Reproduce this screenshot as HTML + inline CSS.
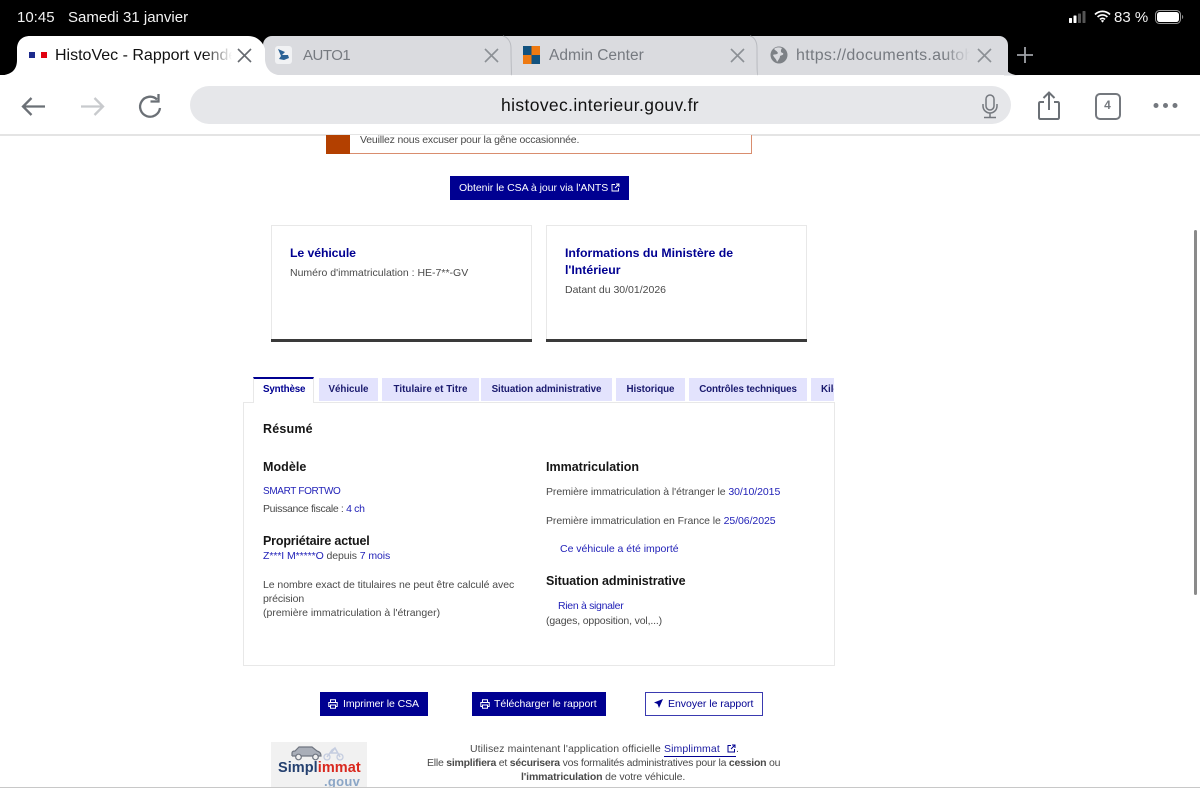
<!DOCTYPE html>
<html lang="fr"><head><meta charset="utf-8"><title>HistoVec</title>
<style>
html,body{margin:0;padding:0;background:#fff}
#p{position:relative;width:1200px;height:788px;overflow:hidden;background:#fff;font-family:"Liberation Sans",sans-serif;filter:blur(.3px)}
#p div{position:absolute}
.t{position:absolute;white-space:nowrap;line-height:1}
.g{color:#4a4a4a;font-size:10.5px;letter-spacing:-.06px}
.b{color:#2222b8}
.h{color:#161616;font-weight:bold;font-size:12.5px;letter-spacing:0}
.tab{position:absolute;top:378px;height:23px;background:#e3e3fd;color:#1a1a6e;font-size:9.8px;font-weight:bold;line-height:23px;text-align:center;white-space:nowrap;overflow:hidden;letter-spacing:-.05px;padding-top:0}
.btn{position:absolute;top:692px;height:24px;background:#000091}
svg{position:absolute;overflow:visible}
</style></head><body><div id="p">

<div style="left:0;top:0;width:1200px;height:75px;background:#000"></div>
<span class="t" style="left:17px;top:10px;color:#f2f2f2;font-size:15px">10:45</span>
<span class="t" style="left:68px;top:10px;color:#f2f2f2;font-size:15px">Samedi 31 janvier</span>
<svg style="left:1069px;top:11px" width="20" height="13"><rect x="0" y="7" width="3" height="5" rx=".6" fill="#fff"/><rect x="4.5" y="4.5" width="3" height="7.5" rx=".6" fill="#fff"/><rect x="9" y="2.5" width="3" height="9.5" rx=".6" fill="#555"/><rect x="13.5" y="0" width="3" height="12" rx=".6" fill="#555"/></svg>
<svg style="left:1094px;top:10px" width="17" height="13" viewBox="0 0 17 13"><path d="M1 4.5a10.5 10.5 0 0 1 15 0M3.6 7a6.8 6.8 0 0 1 9.8 0M6 9.4a3.4 3.4 0 0 1 5 0" fill="none" stroke="#fff" stroke-width="1.7"/><path d="M8.5 12.6l-1.6-1.8a2.2 2.2 0 0 1 3.2 0z" fill="#fff"/></svg>
<span class="t" style="left:1114px;top:10px;color:#f2f2f2;font-size:15px">83 %</span>
<svg style="left:1155px;top:10px" width="30" height="15"><rect x=".5" y=".5" width="25" height="13" rx="4" fill="none" stroke="#999"/><rect x="2" y="2" width="22" height="10" rx="2.6" fill="#fff"/><path d="M27 5v4c.9-.3 1.2-1.1 1.2-2s-.3-1.7-1.2-2z" fill="#888"/></svg>

<div style="left:0;top:75px;width:1200px;height:60px;background:#fff"></div>
<div style="left:263px;top:36px;width:745px;height:39px;background:#dadbdf;border-radius:9px 9px 0 0"></div>
<svg style="left:0;top:36px" width="1030" height="40"><path d="M0 39.5C10 39 17 35 17 24V13C17 5 22 0 30 0H248C257 0 263 6 265 13V24C266 34 272 39 282 39.5Z" fill="#fff"/><path d="M0 39.5H17V30C15 36 10 39 0 39.5Z" fill="#fff"/><path d="M1004 20V28C1005 35 1010 39 1020 39.5H1004Z" fill="#dadbdf"/><path d="M511 39C512 39 511 32 511 12 511 5 507 1 503 0M758 39C757 39 757 32 757 12 757 5 754 1 750 0" fill="none" stroke="#b9bbc0" stroke-width="1"/></svg>

<svg style="left:29px;top:51px" width="18" height="9"><rect x="0" y="1" width="6" height="6" fill="#1d2a8c"/><rect x="6" y="1" width="6" height="6" fill="#fff"/><rect x="12" y="1" width="6" height="6" fill="#e1000f"/></svg>
<span class="t" style="left:55px;top:47px;width:177px;overflow:hidden;color:#111;font-size:16px;letter-spacing:0;line-height:18px;-webkit-mask-image:linear-gradient(90deg,#000 84%,transparent 100%);mask-image:linear-gradient(90deg,#000 84%,transparent 100%)">HistoVec - Rapport vendeur</span>
<svg style="left:237px;top:48px" width="15" height="15"><path d="M1 1L14 14M14 1L1 14" stroke="#666a70" stroke-width="1.6" fill="none"/></svg>

<svg style="left:275px;top:46px" width="17" height="18"><rect width="17" height="18" rx="3" fill="#f1f2f4"/><path d="M3 3L10 6 7 9H13L14 12 9 14 4 13 6 10Z" fill="#2b6296"/></svg>
<span class="t" style="left:303px;top:47px;color:#767a80;font-size:15px;line-height:18px;letter-spacing:-.5px">AUTO1</span>
<svg style="left:484px;top:48px" width="15" height="15"><path d="M1 1L14 14M14 1L1 14" stroke="#8c9095" stroke-width="1.6" fill="none"/></svg>

<svg style="left:523px;top:46px" width="17" height="18"><rect width="8.5" height="9" fill="#12527f"/><rect x="8.5" width="8.5" height="9" fill="#ee7a12"/><rect y="9" width="8.5" height="9" fill="#ee7a12"/><rect x="8.5" y="9" width="8.5" height="9" fill="#12527f"/></svg>
<span class="t" style="left:549px;top:47px;color:#767a80;font-size:15.5px;line-height:18px;letter-spacing:0">Admin Center</span>
<svg style="left:730px;top:48px" width="15" height="15"><path d="M1 1L14 14M14 1L1 14" stroke="#8c9095" stroke-width="1.6" fill="none"/></svg>

<svg style="left:770px;top:46px" width="18" height="18" viewBox="0 0 18 18"><circle cx="9" cy="9" r="8.5" fill="#7d8186"/><path d="M4 3C6 5 7 5 8 7 7 9 4 8 3 9 4 12 6 12 7 16 9 13 10 12 10 10 12 9 14 9 13 7 11 7 10 5 12 2 9 1 6 1 4 3Z" fill="#dadbdf"/></svg>
<span class="t" style="left:796px;top:47px;width:174px;overflow:hidden;color:#767a80;font-size:16px;line-height:18px;letter-spacing:.3px;-webkit-mask-image:linear-gradient(90deg,#000 85%,transparent 100%);mask-image:linear-gradient(90deg,#000 85%,transparent 100%)">https://documents.autohero</span>
<svg style="left:977px;top:48px" width="15" height="15"><path d="M1 1L14 14M14 1L1 14" stroke="#8c9095" stroke-width="1.6" fill="none"/></svg>
<svg style="left:1017px;top:47px" width="16" height="16"><path d="M8 0V16M0 8H16" stroke="#a0a3a8" stroke-width="1.8" fill="none"/></svg>

<div style="left:190px;top:86px;width:821px;height:38px;border-radius:19px;background:#e6e7ea"></div>
<span class="t" style="left:501px;top:95px;color:#111;font-size:17.5px;line-height:20px;letter-spacing:.37px">histovec.interieur.gouv.fr</span>
<svg style="left:21px;top:96px" width="26" height="21"><path d="M24 10.5H2M10.5 2L2 10.5 10.5 19" stroke="#6b7076" stroke-width="2.3" fill="none"/></svg>
<svg style="left:79px;top:96px" width="26" height="21"><path d="M2 10.5H24M15.5 2L24 10.5 15.5 19" stroke="#c8cacd" stroke-width="2.3" fill="none"/></svg>
<svg style="left:137px;top:93px" width="27" height="26"><path d="M20 6.5A10 10 0 1 0 23 15" stroke="#6b7076" stroke-width="2.3" fill="none"/><path d="M21.5 1V8.500H13.5" stroke="#6b7076" stroke-width="2.3" fill="none"/></svg>
<svg style="left:981px;top:94px" width="18" height="25"><rect x="5" y="1" width="8" height="15" rx="4" fill="none" stroke="#74787e" stroke-width="1.5"/><path d="M2 10V12A7 7 0 0 0 16 12V10M9 19V23M3 23.5H15" fill="none" stroke="#74787e" stroke-width="1.5"/></svg>
<svg style="left:1037px;top:91px" width="24" height="30"><path d="M7 11H3.5Q2 11 2 12.5V26.5Q2 28 3.5 28H20.5Q22 28 22 26.5V12.5Q22 11 20.5 11H17M12 19V2M6.5 7L12 1.5 17.5 7" fill="none" stroke="#6b7076" stroke-width="2"/></svg>
<div style="left:1095px;top:93px;width:22px;height:23px;border:2px solid #74787e;border-radius:5px"></div>
<span class="t" style="left:1094px;top:99px;width:27px;text-align:center;color:#74787e;font-size:12px;font-weight:bold">4</span>
<svg style="left:1153px;top:102px" width="25" height="7"><circle cx="3" cy="3.5" r="2.5" fill="#74787e"/><circle cx="12.5" cy="3.5" r="2.5" fill="#74787e"/><circle cx="22" cy="3.5" r="2.5" fill="#74787e"/></svg>
<div style="left:0;top:134px;width:1200px;height:1.5px;background:#e4e4e4"></div>

<div style="left:326px;top:135px;width:425px;height:18px;border-right:1px solid #d98d6e;border-bottom:1px solid #d98d6e;background:#fff"></div>
<div style="left:326px;top:135px;width:24px;height:19px;background:#b34000"></div>
<span class="t g" style="left:360px;top:135px;letter-spacing:-.18px">Veuillez nous excuser pour la gêne occasionnée.</span>

<div style="left:450px;top:176px;width:179px;height:24px;background:#000091"></div>
<span class="t" style="left:459px;top:183px;color:#fff;font-size:10.5px;letter-spacing:-.03px">Obtenir le CSA à jour via l'ANTS</span>
<svg style="left:611px;top:183px" width="9" height="9" viewBox="0 0 9 9"><path d="M4 1.5H1V8H7.5V5M5 1H8V4M8 1L4 5" stroke="#fff" stroke-width=".9" fill="none"/></svg>

<div style="left:271px;top:225px;width:259px;height:114px;border:1px solid #e8e8e8;border-bottom:0"></div>
<div style="left:271px;top:339px;width:261px;height:3px;background:#3a3a3a"></div>
<div style="left:546px;top:225px;width:259px;height:114px;border:1px solid #e8e8e8;border-bottom:0"></div>
<div style="left:546px;top:339px;width:261px;height:3px;background:#3a3a3a"></div>
<span class="t" style="left:290px;top:247px;color:#000091;font-size:12.3px;font-weight:bold;letter-spacing:-.1px">Le véhicule</span>
<span class="t g" style="left:290px;top:268px;letter-spacing:0">Numéro d'immatriculation : HE-7**-GV</span>
<span class="t" style="left:565px;top:247px;color:#000091;font-size:12.3px;font-weight:bold">Informations du Ministère de</span>
<span class="t" style="left:565px;top:264px;color:#000091;font-size:12.3px;font-weight:bold">l'Intérieur</span>
<span class="t g" style="left:565px;top:285px;letter-spacing:0">Datant du 30/01/2026</span>

<div style="left:243px;top:402px;width:590px;height:262px;border:1px solid #e8e8e8;background:#fff"></div>
<div style="left:253px;top:377px;width:61px;height:26px;background:#fff;border:1px solid #e8e8e8;border-top:2px solid #000091;border-bottom:0;box-sizing:border-box"></div>
<span class="t" style="left:263px;top:385px;color:#000091;font-size:9.8px;font-weight:bold;letter-spacing:-.15px">Synthèse</span>
<div class="tab" style="left:319px;width:59px;line-height:24px">Véhicule</div>
<div class="tab" style="left:382px;width:97px;line-height:24px;letter-spacing:.05px">Titulaire et Titre</div>
<div class="tab" style="left:481px;width:131px;line-height:24px">Situation administrative</div>
<div class="tab" style="left:616px;width:69px;line-height:24px">Historique</div>
<div class="tab" style="left:689px;width:118px;line-height:24px;letter-spacing:-.13px">Contrôles techniques</div>
<div class="tab" style="left:811px;width:23px;line-height:24px;text-align:left;text-indent:10px">Kilométrage</div>

<span class="t h" style="left:263px;top:423px;letter-spacing:.2px">Résumé</span>
<span class="t h" style="left:263px;top:461px;letter-spacing:.05px">Modèle</span>
<span class="t b" style="left:263px;top:487px;font-size:10px;letter-spacing:-.35px">SMART FORTWO</span>
<span class="t g" style="left:263px;top:504px;letter-spacing:-.34px">Puissance fiscale : <span class="b">4 ch</span></span>
<span class="t h" style="left:263px;top:535px;letter-spacing:-.17px">Propriétaire actuel</span>
<span class="t g" style="left:263px;top:551px;letter-spacing:-.09px"><span class="b">Z***I M*****O</span> depuis <span class="b">7 mois</span></span>
<span class="t g" style="left:263px;top:580px">Le nombre exact de titulaires ne peut être calculé avec</span>
<span class="t g" style="left:263px;top:594px;letter-spacing:-.1px">précision</span>
<span class="t g" style="left:263px;top:608px;letter-spacing:0">(première immatriculation à l'étranger)</span>

<span class="t h" style="left:546px;top:461px">Immatriculation</span>
<span class="t g" style="left:546px;top:487px;letter-spacing:-.07px">Première immatriculation à l'étranger le <span class="b">30/10/2015</span></span>
<span class="t g" style="left:546px;top:516px;letter-spacing:-.07px">Première immatriculation en France le <span class="b">25/06/2025</span></span>
<span class="t b" style="left:560px;top:544px;font-size:10.5px;letter-spacing:-.02px">Ce véhicule a été importé</span>
<span class="t h" style="left:546px;top:575px;letter-spacing:-.09px">Situation administrative</span>
<span class="t b" style="left:558px;top:601px;font-size:10.5px;letter-spacing:-.31px">Rien à signaler</span>
<span class="t g" style="left:546px;top:616px;letter-spacing:-.15px">(gages, opposition, vol,...)</span>

<div class="btn" style="left:320px;width:108px"></div>
<svg style="left:328px;top:699px" width="10" height="10" viewBox="0 0 10 10"><path d="M2.5 3.5V.8H7.5V3.5M2.5 7.5H.8V3.5H9.2V7.5H7.5M2.5 6H7.5V9.2H2.5Z" fill="none" stroke="#fff" stroke-width="1"/></svg>
<span class="t" style="left:343px;top:699px;color:#fff;font-size:10.5px;letter-spacing:-.07px">Imprimer le CSA</span>
<div class="btn" style="left:472px;width:134px"></div>
<svg style="left:480px;top:699px" width="10" height="10" viewBox="0 0 10 10"><path d="M2.5 3.5V.8H7.5V3.5M2.5 7.5H.8V3.5H9.2V7.5H7.5M2.5 6H7.5V9.2H2.5Z" fill="none" stroke="#fff" stroke-width="1"/></svg>
<span class="t" style="left:494px;top:699px;color:#fff;font-size:10.5px;letter-spacing:-.03px">Télécharger le rapport</span>
<div style="left:645px;top:692px;width:116px;height:22px;border:1px solid #3a3ab0;background:#fff"></div>
<svg style="left:654px;top:699px" width="9" height="9" viewBox="0 0 9 9"><path d="M9 0L0 3.5 3.5 5 5 9Z" fill="#000091"/></svg>
<span class="t" style="left:668px;top:699px;color:#000091;font-size:10.5px;letter-spacing:-.02px">Envoyer le rapport</span>

<div style="left:271px;top:742px;width:96px;height:46px;background:#f1f1f1"></div>
<svg style="left:291px;top:745px" width="54" height="16" viewBox="0 0 54 16"><path d="M1 11V8Q1 6 4 6L8 2H21L26 6Q30 7 30 11H27M6 11H1M22 11H10" fill="#a9aeb8" stroke="#6f7580" stroke-width="1.2"/><circle cx="7.5" cy="12" r="2.8" fill="#f1f1f1" stroke="#6f7580" stroke-width="1.2"/><circle cx="24.5" cy="12" r="2.8" fill="#f1f1f1" stroke="#6f7580" stroke-width="1.2"/><circle cx="36" cy="12" r="3" fill="none" stroke="#c5cde0" stroke-width="1.3"/><circle cx="49" cy="12" r="3" fill="none" stroke="#c5cde0" stroke-width="1.3"/><path d="M36 12L41 5 44 3M49 12L44 3 40 8H46" fill="none" stroke="#c5cde0" stroke-width="1.5"/></svg>
<span class="t" style="left:278px;top:761px;color:#24406f;font-size:14.5px;font-weight:bold;letter-spacing:.05px">Simpl<span style="color:#d9281e">immat</span></span>
<span class="t" style="left:324px;top:775px;color:#8ba6c6;font-size:13px;font-weight:bold;letter-spacing:.3px">.gouv</span>

<span class="t g" style="left:470px;top:744px;letter-spacing:.09px">Utilisez maintenant l'application officielle</span>
<span class="t" style="left:664px;top:744px;width:72px;color:#1a1aa0;font-size:10.5px;letter-spacing:.1px;border-bottom:1px solid #000091;padding-bottom:1px">Simplimmat</span>
<svg style="left:727px;top:744px" width="9" height="9" viewBox="0 0 9 9"><path d="M4 1.5H1V8H7.5V5M5 1H8V4M8 1L4 5" stroke="#000091" stroke-width="1" fill="none"/></svg>
<span class="t g" style="left:736px;top:744px">.</span>
<span class="t g" style="left:427px;top:758px;letter-spacing:-.24px">Elle <b>simplifiera</b> et <b>sécurisera</b> vos formalités administratives pour la <b>cession</b> ou</span>
<span class="t g" style="left:521px;top:772px;letter-spacing:-.13px"><b>l'immatriculation</b> de votre véhicule.</span>

<div style="left:0;top:787px;width:1200px;height:1px;background:#c8c8c8"></div>
<div style="left:1194px;top:230px;width:3px;height:365px;border-radius:2px;background:#8a8a8a"></div>
</div></body></html>
